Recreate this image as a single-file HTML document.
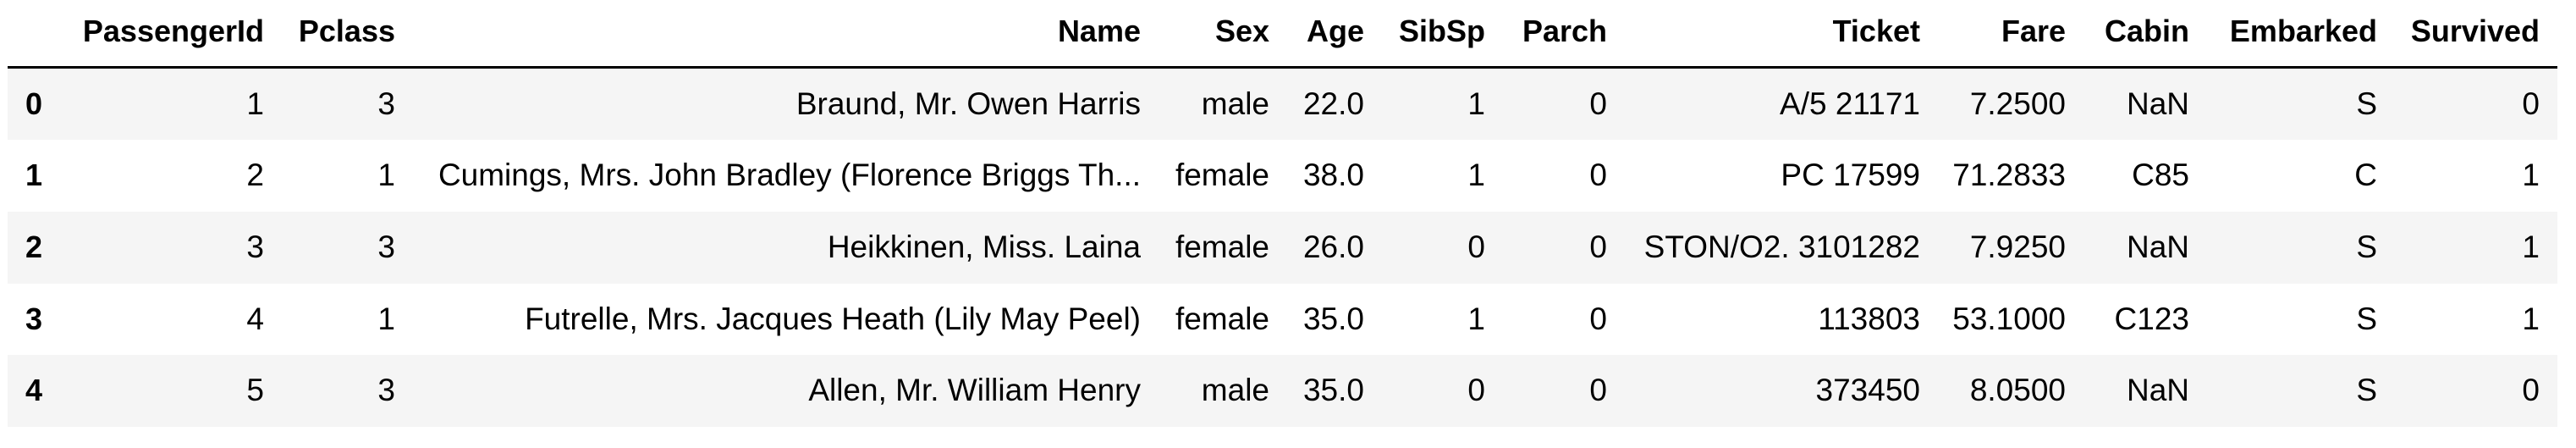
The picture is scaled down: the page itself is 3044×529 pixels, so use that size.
<!DOCTYPE html>
<html><head><meta charset="utf-8"><style>
body{margin:0;width:3044px;height:529px;background:#fff;position:relative;overflow:hidden;font-family:"Liberation Sans",Arial,sans-serif;color:#000}
.band{position:absolute;left:9px;width:3013px;background:#f5f5f5}
.line{position:absolute;left:9px;width:3013px;top:78px;height:3px;background:#000}
.c{position:absolute;font-size:37px;line-height:40px;white-space:nowrap}
.r{transform:translateX(-100%)}
.b{font-weight:bold;font-size:36px}
</style></head><body>
<div class="band" style="top:81px;height:84px"></div>
<div class="band" style="top:250px;height:85px"></div>
<div class="band" style="top:419px;height:85px"></div>
<div class="line"></div>
<div id="t"></div>
<script>
var cols=[312,467,1348,1500,1612,1755,1899,2269,2441,2587,2809,3001];
var head=["PassengerId","Pclass","Name","Sex","Age","SibSp","Parch","Ticket","Fare","Cabin","Embarked","Survived"];
var rows=[
["1","3","Braund, Mr. Owen Harris","male","22.0","1","0","A/5 21171","7.2500","NaN","S","0"],
["2","1","Cumings, Mrs. John Bradley (Florence Briggs Th...","female","38.0","1","0","PC 17599","71.2833","C85","C","1"],
["3","3","Heikkinen, Miss. Laina","female","26.0","0","0","STON/O2. 3101282","7.9250","NaN","S","1"],
["4","1","Futrelle, Mrs. Jacques Heath (Lily May Peel)","female","35.0","1","0","113803","53.1000","C123","S","1"],
["5","3","Allen, Mr. William Henry","male","35.0","0","0","373450","8.0500","NaN","S","0"]];
var h="";
function cell(x,y,txt,cls){return '<div class="c '+cls+'" style="left:'+x+'px;top:'+(y-20)+'px">'+txt+'</div>';}
head.forEach(function(t,i){h+=cell(cols[i],37,t,"r b");});
var centers=[123,207,292,377,461];
rows.forEach(function(r,ri){
 h+=cell(30,centers[ri],String(ri),"b");
 r.forEach(function(t,i){h+=cell(cols[i],centers[ri],t,"r");});
});
document.getElementById("t").innerHTML=h;
</script>
</body></html>
